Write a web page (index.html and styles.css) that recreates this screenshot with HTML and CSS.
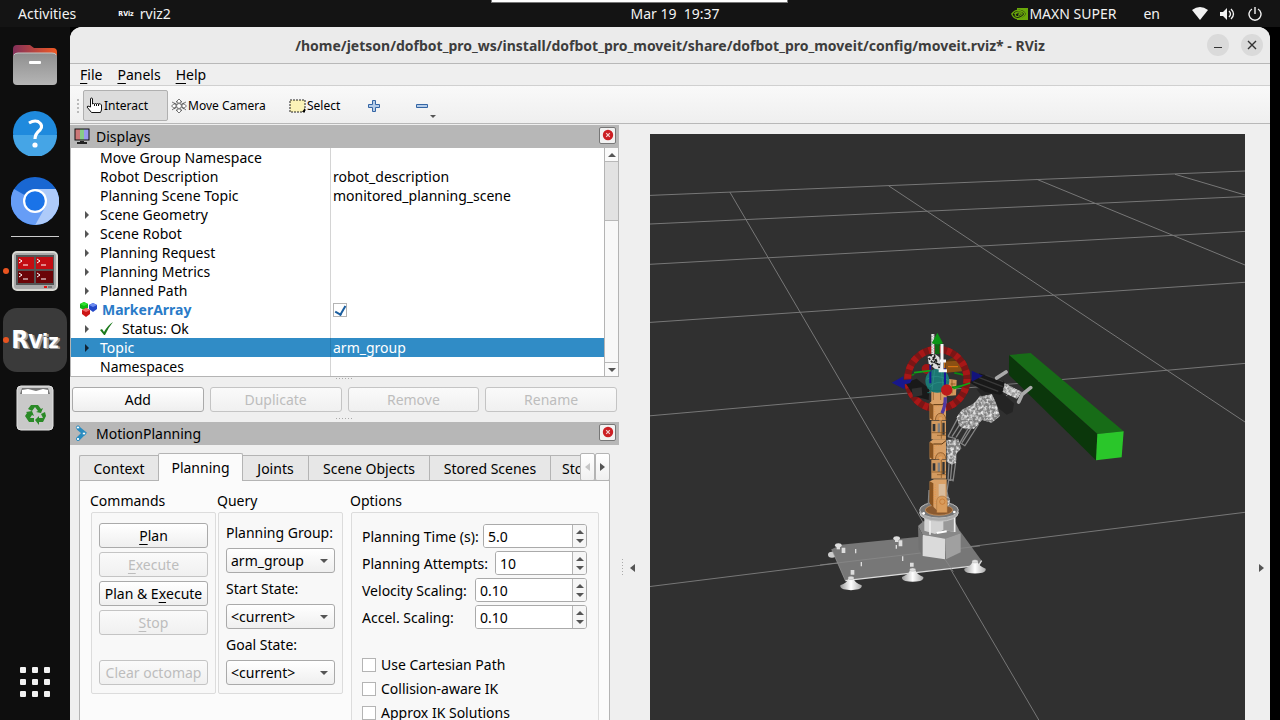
FILE: index.html
```html
<!DOCTYPE html>
<html lang="en">
<head>
<meta charset="utf-8">
<title>RViz</title>
<link rel="stylesheet" href="styles.css">
</head>
<body>
<header class="topbar">
  <div class="peek"></div>
  <div class="top-left">
    <span>Activities</span>
    <span class="app"><span class="rv-mini" aria-hidden="true">RViz</span>rviz2</span>
  </div>
  <time class="clock">Mar 19&nbsp; 19:37</time>
  <div class="top-right">
    <span class="power-mode"><svg width="17" height="12" viewBox="0 0 17 12"><path d="M6 0h11v12H6z" fill="#6aa80a"/><path d="M6 2v8q6 1 9-4-3-5-9-4z" fill="#141414"/><path d="M.8 6Q4 1.500 8 2.500q4 .5 6 3.500-4 5-8 4.500Q2.500 10 .8 6z" fill="none" stroke="#6aa80a" stroke-width="1.300"/><path d="M3 6q3-3.500 7-1.500 1 1 1.500 1.500Q9 9 6 8.500 3.500 8 4.500 6q2-2 4-.8L9.500 6 7 7.200" fill="none" stroke="#6aa80a" stroke-width="1.100"/></svg>MAXN SUPER</span>
    <span>en</span>
    <span class="status">
      <svg width="16" height="14" viewBox="0 0 16 14"><path d="M0 3q8-6 16 0L8 13z" fill="#f2f2f2"/></svg>
      <svg width="16" height="14" viewBox="0 0 16 14"><path d="M0 5h3l4-4v12l-4-4H0z" fill="#f2f2f2"/><path d="M9 4q3 3 0 6M11 2q5 5 0 10" fill="none" stroke="#f2f2f2" stroke-width="1.3"/></svg>
      <svg width="14" height="14" viewBox="0 0 14 14"><path d="M4 2a6 6 0 1 0 6 0M7 0v7" fill="none" stroke="#f2f2f2" stroke-width="1.4"/></svg>
    </span>
  </div>
</header>
<div class="desk">
  <nav class="dock" aria-label="Dock">
    <button class="dk" aria-label="Files"><svg width="46" height="42" viewBox="0 0 46 42"><defs><linearGradient id="fo"><stop offset="0" stop-color="#83305a"/><stop offset="1" stop-color="#f05a24"/></linearGradient><linearGradient id="fg" x2="0" y2="1"><stop offset="0" stop-color="#8f8f8f"/><stop offset="1" stop-color="#b5b5b5"/></linearGradient></defs><path d="M1 5q0-4 4-4h13l4 3h19q4 0 4 4v12H1z" fill="url(#fo)"/><rect x="1" y="9" width="44" height="32" rx="4" fill="url(#fg)"/><path d="M2 11q1-2 4-2h34q4 0 4 2" fill="none" stroke="#c5c5c5"/><rect x="17" y="17" width="12" height="3" rx="1" fill="#fff"/></svg></button>
    <button class="dk" aria-label="Help"><svg width="46" height="46" viewBox="0 0 46 46"><circle cx="23" cy="23" r="22" fill="#1f8add"/><path d="M1 25h44a22 22 0 0 1-44 0z" fill="#45a5e6"/><path d="M17 13q5-3 9-1.500 6 4 2 8.500-5 4-5 9" fill="none" stroke="#fff" stroke-width="3.200"/><circle cx="23" cy="35" r="2.6" fill="#fff"/></svg></button>
    <button class="dk" aria-label="Chromium"><svg width="48" height="48" viewBox="0 0 48 48"><circle cx="24" cy="24" r="24" fill="#1967d2"/><path d="M3 12A24 24 0 0 0 24 48L36 30 24 24z" fill="#669df6"/><path d="M24 12h20.800A24 24 0 0 1 24 48l11-19z" fill="#aecbfa"/><circle cx="24" cy="24" r="12" fill="#fff"/><circle cx="24" cy="24" r="9.800" fill="#1a73e8"/></svg></button>
    <hr class="dk-line">
    <button class="dk run" aria-label="Terminator"><svg width="46" height="40" viewBox="0 0 46 40"><rect x="1" y="1" width="44" height="38" rx="4" fill="#aaa" stroke="#d8d8d3" stroke-width="2"/><rect x="4" y="4" width="38" height="30" fill="#555"/><path d="M6 6h16v12H6zM24 6h17v12H24z" fill="#c20c12"/><path d="M6 20h16v12H6zM24 20h17v12H24z" fill="#6b0508"/><path d="M7 8l3 2-3 2m4 2h5M25 8l3 2-3 2m4 2h5M7 22l3 2-3 2m4 2h5M25 22l3 2-3 2m4 2h5" fill="none" stroke="#fff"/><path d="M32 36h3" stroke="#e01414" stroke-width="2"/><path d="M36 36h4" stroke="#777" stroke-width="2"/></svg></button>
    <button class="dk run active" aria-label="RViz"><span class="rv-logo">RViz</span></button>
    <button class="dk" aria-label="Trash"><svg width="38" height="46" viewBox="0 0 38 46"><rect x="1" y="1" width="36" height="44" rx="4" fill="#c9c9c9" stroke="#e4e4e4"/><path d="M4 9l2-6h26l2 6z" fill="#777"/><path d="M6 9V5l6-1 8 2 7-2 5 1v4z" fill="#fff"/><g fill="#2a8a27"><path d="M15 20h7l3 4 2-1-2 5-5-1 2-1-3-4-3 4-4-2z"/><path d="M25 29l4-2 1 4-3 6h-4v3l-4-5 4-4v2h4z"/><path d="M10 27l6-1 2 5-2-1-2 3h4v4h-5l-4-6 2-3z"/></g></svg></button>
    <button class="dk apps" aria-label="Show applications"><svg width="30" height="30" viewBox="0 0 30 30" fill="#f2f2f2"><rect width="6" height="6" rx="1"/><rect x="12" width="6" height="6" rx="1"/><rect x="24" width="6" height="6" rx="1"/><rect y="12" width="6" height="6" rx="1"/><rect x="12" y="12" width="6" height="6" rx="1"/><rect x="24" y="12" width="6" height="6" rx="1"/><rect y="24" width="6" height="6" rx="1"/><rect x="12" y="24" width="6" height="6" rx="1"/><rect x="24" y="24" width="6" height="6" rx="1"/></svg></button>
  </nav>
  <main class="window">
    <div class="titlebar">
      <h1>/home/jetson/dofbot_pro_ws/install/dofbot_pro_moveit/share/dofbot_pro_moveit/config/moveit.rviz* - RViz</h1>
      <div class="win-btns">
        <button aria-label="Minimize"><svg width="10" height="10" viewBox="0 0 10 10"><path d="M1 7.500h8" stroke="#333" stroke-width="1.2"/></svg></button>
        <button aria-label="Close"><svg width="10" height="10" viewBox="0 0 10 10"><path d="M1 1l8 8M9 1l-8 8" stroke="#333" stroke-width="1.4"/></svg></button>
      </div>
    </div>
    <div class="menubar"><button><u>F</u>ile</button><button><u>P</u>anels</button><button><u>H</u>elp</button></div>
    <div class="toolbar">
      <i class="grip"></i>
      <button class="tool on"><svg width="17" height="17" viewBox="0 0 17 17"><path d="M4.500 10V2q0-1 1-1t1 1v5q1-1 2 0 1-1 2 0 1-1 2 0 2-1 3 1v5l-1 2.500H5.500L1 10q0-2 3.500 0z" fill="#fff" stroke="#111"/><path d="M8.500 7v2M10.500 7v2M12.500 7v2" stroke="#111"/></svg>Interact</button>
      <button class="tool move"><svg width="16" height="16" viewBox="0 0 16 16" fill="#fff" stroke="#555" stroke-width=".8"><path d="M8 1l3 3H9v3h3V5l3.500 3-3.500 3V9H9v3h2l-3 3-3-3h2V9H4v2L.5 8 4 5v2h3V4H5z"/><path d="M1 4l6 3M15 4L9 7M1 12l4-3M15 12l-4-3"/><circle cx="8" cy="8" r="2.500"/></svg>Move Camera</button>
      <button class="tool sel"><svg width="17" height="14" viewBox="0 0 17 14"><path d="M1 1h15v12H1z" fill="#fbf3b7" stroke="#222" stroke-dasharray="2 1"/><path d="M16 9v4h-3z"/></svg>Select</button>
      <button class="tool add" aria-label="Add tool"><svg width="12" height="12" viewBox="0 0 12 12"><path d="M4.500.5h3v4h4v3h-4v4h-3v-4h-4v-3h4z" fill="#b5cce8" stroke="#3465a4"/></svg></button>
      <button class="tool rem" aria-label="Remove tool"><svg width="22" height="26" viewBox="0 0 22 26"><path d="M.5 11.500h11v3H.5z" fill="#b5cce8" stroke="#3465a4"/><path d="M14 22h6l-3 3z" fill="#555"/></svg></button>
    </div>
    <div class="content">
      <section class="panels">
        <div class="panel-title"><svg width="16" height="17" viewBox="0 0 16 17"><path d="M.5.5h15v12H.5z" fill="#111"/><path d="M1.500 1.500h4.500v10H1.500z" fill="#c77"/><path d="M6 1.500h4v10H6z" fill="#8c8"/><path d="M10 1.500h4.500v10H10z" fill="#99e"/><path d="M6 13h4v1h3v2H3v-2h3z" fill="#222"/></svg><h2>Displays</h2><button class="x" aria-label="Close Displays"><svg width="12" height="12" viewBox="0 0 12 12"><circle cx="6" cy="6" r="5.200" fill="#cc1f24"/><path d="M4.200 4.200l3.600 3.600M7.800 4.200L4.200 7.800" stroke="#f4d0d0" stroke-width="1.200"/></svg></button></div>
        <div class="tree-wrap">
          <table class="tree">
            <tr><td>Move Group Namespace</td><td></td></tr>
            <tr><td>Robot Description</td><td>robot_description</td></tr>
            <tr><td>Planning Scene Topic</td><td>monitored_planning_scene</td></tr>
            <tr class="ex"><td>Scene Geometry</td><td></td></tr>
            <tr class="ex"><td>Scene Robot</td><td></td></tr>
            <tr class="ex"><td>Planning Request</td><td></td></tr>
            <tr class="ex"><td>Planning Metrics</td><td></td></tr>
            <tr class="ex"><td>Planned Path</td><td></td></tr>
            <tr class="marker"><td><svg width="17" height="15" viewBox="0 0 17 15"><path d="M0 2l4-2 4 2v4L4 8 0 6z" fill="#10b510"/><path d="M9 3l4-2 4 2v4l-4 3-4-3z" fill="#2448c8"/><path d="M2 8l4-2 4 2v4l-4 3-4-3z" fill="#cc1515"/><path d="M0 2l4-2 4 2-4 2z" fill="#2ee02e"/><path d="M9 3l4-2 4 2-4 2z" fill="#6d8cf0"/><path d="M2 8l4-2 4 2-4 2z" fill="#f06a6a"/></svg>MarkerArray</td><td><input type="checkbox" checked aria-label="MarkerArray enabled"></td></tr>
            <tr class="ex ok"><td><svg width="14" height="14" viewBox="0 0 14 14"><path d="M0 8l2-1 2 3Q8 3 13 0 8 6 5 13H4z" fill="#1c7a1c"/></svg>Status: Ok</td><td></td></tr>
            <tr class="ex cur"><td>Topic</td><td>arm_group</td></tr>
            <tr><td>Namespaces</td><td></td></tr>
          </table>
          <div class="sbar"><button aria-label="Scroll up"><i class="up"></i></button><div class="thumb"></div><span class="track"></span><button aria-label="Scroll down"><i class="dn"></i></button></div>
        </div>
        <div class="hgrip"><i></i></div>
        <div class="btn-row"><button class="btn">Add</button><button class="btn" disabled>Duplicate</button><button class="btn" disabled>Remove</button><button class="btn" disabled>Rename</button></div>
        <div class="hgrip low"><i></i></div>
        <div class="panel-title"><svg width="16" height="17" viewBox="0 0 16 17"><path d="M4 3l6 5-6 6" fill="none" stroke="#2a8cc0" stroke-width="4"/><g fill="#fff" stroke="#2a8cc0"><circle cx="4" cy="2.500" r="1.600"/><circle cx="10" cy="8.500" r="1.600"/><circle cx="4" cy="14" r="1.600"/></g></svg><h2>MotionPlanning</h2><button class="x" aria-label="Close MotionPlanning"><svg width="12" height="12" viewBox="0 0 12 12"><circle cx="6" cy="6" r="5.200" fill="#cc1f24"/><path d="M4.200 4.200l3.600 3.600M7.800 4.200L4.200 7.800" stroke="#f4d0d0" stroke-width="1.200"/></svg></button></div>
        <div class="mp">
          <div class="tabs" role="tablist">
            <div class="tab-clip">
            <button class="tab t1" role="tab">Context</button><button class="tab t2 on" role="tab">Planning</button><button class="tab t3" role="tab">Joints</button><button class="tab t4" role="tab">Scene Objects</button><button class="tab t4" role="tab">Stored Scenes</button><button class="tab t5" role="tab">Stored States</button>
            </div>
            <button class="nav" aria-label="Previous tabs" disabled><i class="lf"></i></button><button class="nav" aria-label="Next tabs"><i class="rt"></i></button>
          </div>
          <div class="page">
            <section class="group">
              <h3>Commands</h3>
              <div class="box cmds">
                <button class="btn"><u>P</u>lan</button>
                <button class="btn" disabled><u>E</u>xecute</button>
                <button class="btn">Plan &amp; E<u>x</u>ecute</button>
                <button class="btn" disabled><u>S</u>top</button>
                <button class="btn clear" disabled>Clear octomap</button>
              </div>
            </section>
            <section class="group">
              <h3>Query</h3>
              <div class="box query">
                <label for="pg">Planning Group:</label><span class="combo"><select id="pg"><option>arm_group</option></select></span>
                <label for="ss">Start State:</label><span class="combo"><select id="ss"><option>&lt;current&gt;</option></select></span>
                <label for="gs">Goal State:</label><span class="combo"><select id="gs"><option>&lt;current&gt;</option></select></span>
              </div>
            </section>
            <section class="group opt">
              <h3>Options</h3>
              <div class="box opts">
                <div class="field"><label for="pt">Planning Time (s):</label><span class="spin wide"><input id="pt" value="5.0"><span><button aria-label="Increase"><i class="up"></i></button><button aria-label="Decrease"><i class="dn"></i></button></span></span></div>
                <div class="field"><label for="pa">Planning Attempts:</label><span class="spin mid"><input id="pa" value="10"><span><button aria-label="Increase"><i class="up"></i></button><button aria-label="Decrease"><i class="dn"></i></button></span></span></div>
                <div class="field"><label for="vs">Velocity Scaling:</label><span class="spin"><input id="vs" value="0.10"><span><button aria-label="Increase"><i class="up"></i></button><button aria-label="Decrease"><i class="dn"></i></button></span></span></div>
                <div class="field"><label for="as">Accel. Scaling:</label><span class="spin"><input id="as" value="0.10"><span><button aria-label="Increase"><i class="up"></i></button><button aria-label="Decrease"><i class="dn"></i></button></span></span></div>
                <div class="checks">
                  <label><input type="checkbox">Use Cartesian Path</label>
                  <label><input type="checkbox">Collision-aware IK</label>
                  <label><input type="checkbox">Approx IK Solutions</label>
                </div>
              </div>
            </section>
          </div>
        </div>
      </section>
      <div class="vsplit"><i class="vdots"></i><button aria-label="Collapse left"><i class="lf"></i></button></div>
      <div class="view">
        <svg viewBox="650 134 595 586" preserveAspectRatio="xMidYMin slice" role="img" aria-label="3D view of the robot arm">
          <defs>
            <linearGradient id="cup"><stop offset="0" stop-color="#999"/><stop offset=".5" stop-color="#fff"/><stop offset="1" stop-color="#aaa"/></linearGradient>
            <filter id="grain" x="0" y="0" width="1" height="1"><feTurbulence type="fractalNoise" baseFrequency=".12" numOctaves="2" seed="4" result="n"/><feColorMatrix in="n" values="0 0 0 0 .85  0 0 0 0 .85  0 0 0 0 .85  0 2.500 0 0 -1" result="w"/><feComposite in="w" in2="SourceGraphic" operator="in" result="c"/><feMerge><feMergeNode in="SourceGraphic"/><feMergeNode in="c"/></feMerge></filter>
            <g id="foot"><path d="M-8-22H8Q12-10 32-2q2 8-10 12-22 5-44 0Q-34 6-32-2-12-10-8-22z" fill="url(#cup)"/><ellipse cy="-24" rx="9" ry="5" fill="#ddd" stroke="#999"/></g>
            <g id="link"><path d="M-25 8L-14 0H24V60H-25z" fill="#d9a066"/><path d="M-25 8L-14 14V62L-25 54z" fill="#8a5420"/><path d="M-14 14H12L24 4" fill="none" stroke="#5a3510" stroke-width="3"/><path d="M-10 20v36M-6 18h18" stroke="#f08a30" stroke-width="2" stroke-dasharray="2 5"/><path d="M-8 60q2-20 16-20t16 20" fill="#cf9458" stroke="#7a4615" stroke-width="2"/><circle cx="8" cy="56" r="6" fill="#dba368" stroke="#e87a20" stroke-dasharray="2 3" stroke-width="2"/><path d="M-20 62H24v56H-20z" fill="#d39a5f"/><path d="M-16 72h8v22h-8zM13 68h7v36h-7z" fill="#333"/><path d="M-1 70h7v28h-7z" fill="#7e7e7e"/><path d="M-19 98h43M10 62v54M-3 106h27" stroke="#80501d" stroke-width="2"/></g>
          </defs>
          <path d="M650 134h595v586H650z" fill="#303030"/>
          <g stroke="#777" fill="none"><path d="M650 195.400L1245 171M650 224L1245 196.500M650 264.300L1245 231.400M650 322.400L1245 282.300M650 415.800L1245 363.400M650 586.500L1245 512.300"/><path d="M729.800 192L1038.800 720M888.600 185.800L1245 422M1036.800 179.300L1245 265M1175 174.300L1245 195"/></g>
          <g transform="translate(820 320) scale(.33333)">
            <path d="M567 105L632 99 911 334 832 342z" fill="#176c17"/><path d="M567 105L832 342 828 421 567 165z" fill="#0b370b"/><path d="M832 342L911 334 905 412 828 421z" fill="#2ac62a"/>
            <ellipse cx="36" cy="704" rx="12" ry="9" fill="#ccc"/>
            <path d="M35 688L62 674 300 650 420 633 485 722 476 736 76 782z" fill="#777"/>
            <path d="M76 782L476 736 485 722" fill="none" stroke="#ddd" stroke-width="4"/><path d="M35 688L76 782" stroke="#999" stroke-width="2"/>
            <path d="M0 735L480 678M375 718L400 755" stroke="#8c8c8c" stroke-width="2"/>
            <use href="#foot" x="93" y="798"/><use href="#foot" x="278" y="773"/><use href="#foot" x="465" y="748"/>
            <g fill="#ddd"><ellipse cx="55" cy="676" rx="10" ry="6"/><path d="M50 678h10v10H50z"/><ellipse cx="230" cy="655" rx="10" ry="6"/><path d="M225 658h10v8h-10zM65 683h11v16H65zM236 661h11v18h-11zM105 687h4v13h-4zM122 726h4v13h-4zM246 709h4v14h-4zM92 750h11v14H92zM270 728h11v12h-11zM227 675h4v11h-4z"/></g>
            <path d="M294 618L310 604 404 604 422 640 375 656 308 644z" fill="#888"/><path d="M294 618L308 644V708L296 688z" fill="#727272"/><path d="M308 644L375 656V718L308 708z" fill="#dadada"/><path d="M375 656L422 640V697L378 718z" fill="#a0a0a0"/>
            <path d="M313 590H405V636L370 630 345 642 313 632z" fill="#d2d2d2"/><path d="M370 590H405V636L370 630z" fill="#999"/><path d="M330 585V644M404 583V636" stroke="#eee" stroke-width="5"/><path d="M350 639L380 634" stroke="#fff" stroke-width="6"/>
            <ellipse cx="357" cy="578" rx="58" ry="26" fill="#aaa" stroke="#c8c8c8" stroke-width="3"/><ellipse cx="357" cy="570" rx="58" ry="24" fill="#777" stroke="#bbb" stroke-width="3"/><ellipse cx="357" cy="570" rx="41" ry="16" fill="#8a5a30" stroke="#d59a60" stroke-width="2"/>
            <g fill="#fff"><circle cx="311" cy="580" r="4"/><circle cx="403" cy="576" r="4"/><circle cx="374" cy="548" r="4"/></g>
            <g fill="none" stroke="#858585" stroke-width="4"><path d="M384 350L420 282M396 350L434 290M408 352L444 296M426 368L464 308M434 378L476 312M420 368L456 306M387 430L384 480M396 430L391 483M407 426L399 484M386 480L378 530M327 510L325 552M380 510L388 550M384 350L408 356M420 368L436 378M384 480H400"/></g>
            <g filter="url(#grain)" fill="#808080"><path d="M410 292L425 270 462 250 480 228 518 222 528 245 540 288 515 308 486 300 462 326 436 328 418 318z"/><path d="M380 360L415 358 424 385 410 400 408 428 395 434 380 425zM376 525L390 535 388 560 372 560z"/></g>
            <path d="M470 208L525 200 582 250 578 276 560 284 535 264 516 222 485 228z" fill="#242424"/>
            <path d="M448 187L478 160 550 182 566 210 540 224 496 216z" fill="#191919"/><path d="M470 170L548 200M460 186L535 214M496 165l54 20" stroke="#3a3a3a" stroke-width="4"/>
            <path d="M530 174L558 156M596 246L606 224 632 203" fill="none" stroke="#aaa" stroke-width="11" stroke-linecap="round"/>
            <path d="M554 190l52 26-16 20-42-20z" fill="#999" filter="url(#grain)"/><path d="M560 192l38 40M585 205l-26 22" stroke="#ddd" stroke-width="2"/>
            <path d="M376 124L424 122 426 154 378 158z" fill="#8a5013"/><path d="M376 124l26-14 22 12z" fill="#5c370f"/><path d="M374 126v24M384 140h30" stroke="#e67a10" stroke-width="3"/>
            <path d="M382 176L410 180 408 226 382 228z" fill="#d39a5c"/><path d="M392 192h14M396 180v40" stroke="#7a4612" stroke-width="2"/>
            <ellipse cx="352" cy="180" rx="96" ry="25" fill="none" stroke="#0a8a10" stroke-width="5" stroke-dasharray="60 30"/>
            <circle cx="352" cy="177" r="89" fill="none" stroke="#7a1616" stroke-width="21"/><circle cx="352" cy="177" r="89" fill="none" stroke="#a81717" stroke-width="21" stroke-dasharray="14 14"/>
            <path d="M256 188L290 176 328 206 326 240 282 228z" fill="#191919"/><path d="M275 206l30-4 2 24-28 6z" fill="#303030"/>
            <path d="M334 212H380V250H334z" fill="#d9a066"/><path d="M340 216v30M362 214v30" stroke="#8b551f" stroke-width="2"/>
            <use href="#link" x="354" y="240"/><use href="#link" x="354" y="358"/>
            <path d="M329 484L342 478H380V570H350L329 550z" fill="#d9a066"/><path d="M356 492h20v40h-20z" fill="#d9bc9c"/><path d="M329 484L340 490V562L329 550z" fill="#8a5420"/><path d="M346 494v60M341 500v50" stroke="#f08a30" stroke-width="2" stroke-dasharray="2 5"/><path d="M350 578V542q3-14 16-14t16 14V578z" fill="#d99c5c" stroke="#8a501a" stroke-width="1"/><circle cx="367" cy="545" r="8" fill="none" stroke="#c0702a" stroke-width="2"/>
            <circle cx="320" cy="147" r="15" fill="#a01515"/>
            <circle cx="352" cy="182" r="36" fill="#1c7773"/><path d="M320 178q30-20 66 4M330 200q20-20 50-10M344 150l-8 60M364 150l6 60" fill="none" stroke="#2d938a" stroke-width="2"/><path d="M322 204h10v14h-10M332 212h44" stroke="#187068" stroke-width="3" fill="none"/>
            <path d="M331 135V190M375 145V212" stroke="#17179a" stroke-width="6"/><path d="M376 232Q376 260 366 280" fill="none" stroke="#5038a0" stroke-width="10"/>
            <path d="M215 188L250 169V180L277 178 270 190 254 193V208z" fill="#18188c"/><path d="M455 152L489 167 455 185z" fill="#13137c"/>
            <path d="M334 42h9v60h-9z" fill="#e6e6e6"/><path d="M336 48v56M342 44v50" stroke="#555" stroke-width="2" stroke-dasharray="3 5"/><path d="M352 38L369 70Q352 78 335 70z" fill="#0b9416"/><path d="M345 74h14v28h-14z" fill="#0c6a12"/>
            <path d="M323 110L345 102 358 112 364 150 344 146 326 130z" fill="#ddd"/><path d="M326 114l10 12 8-18 4 22 12 4M334 138l14-18 10 24M330 104l20 18" fill="none" stroke="#202020" stroke-width="5" stroke-dasharray="7 4"/>
            <path d="M366 72V152M356 152H381M360 123H378" stroke="#f5f5f5" stroke-width="9"/>
            <circle cx="380" cy="210" r="17" fill="#bd1b1b"/><path d="M282 158l50-6M400 206l50-17" stroke="#10a416" stroke-width="5"/>
          </g>
        </svg>
      </div>
      <div class="vright"><button aria-label="Collapse right"><i class="rt"></i></button></div>
    </div>
  </main>
</div>
</body>
</html>
```
FILE: styles.css
```css
* { box-sizing: border-box; }
body { margin: 0; height: 100vh; overflow: hidden; display: flex; flex-direction: column; background: #000; color: #000; font: 14px/19px "Noto Sans", sans-serif; }
button { font: inherit; color: inherit; border: 0; padding: 0; background: none; display: flex; align-items: center; justify-content: center; }
h1, h2, h3 { margin: 0; font: inherit; }
svg { display: block; flex: none; }
u { text-underline-offset: 3px; }
.rv-logo, .rv-mini { font-family: "DejaVu Sans Condensed", "DejaVu Sans", sans-serif; font-stretch: condensed; font-weight: 700; color: #fff; }
.rv-logo { font-size: 20px; line-height: 34px; text-shadow: 1px 1px #999, 2px 1px #999; }
.rv-logo::first-letter { font-size: 25px; }
.rv-mini { font-size: 7px; line-height: 14px; }

.topbar { position: relative; height: 27px; flex: none; background: #141414; color: #f2f2f2; display: grid; grid-template-columns: 1fr auto 1fr; align-items: center; padding: 0 18px; }
.peek { position: absolute; left: 491px; top: 0; width: 297px; height: 3px; background: #fff; border: 1px solid #777; border-top: 0; }
.top-left, .top-right { display: flex; align-items: center; }
.top-left { gap: 42px; }
.app { display: flex; align-items: center; gap: 6px; }
.clock { margin-left: 70px; }
.top-right { justify-content: flex-end; gap: 28px; }
.power-mode { display: flex; align-items: center; gap: 1px; }
.power-mode { margin-right: -1px; }
.status { display: flex; gap: 12px; margin-left: 4px; }

.desk { flex: 1; min-height: 0; display: flex; padding-right: 10px; }
.dock { width: 70px; flex: none; background: #0e0e0e; display: flex; flex-direction: column; align-items: center; padding: 6px 3px; gap: 4px; }
.dk { width: 64px; height: 64px; border-radius: 14px; position: relative; flex: none; }
.dk.active { background: #3a3a3a; margin-top: 1px; }
.dk.run::before { content: ""; position: absolute; left: 0; top: 29px; width: 6px; height: 6px; border-radius: 50%; background: #e95420; }
.dk-line { width: 48px; height: 1px; border: 0; background: #ccc; margin: -1px 0 -2px; }
.dk.apps { margin-top: auto; }

.window { flex: 1; min-width: 0; display: flex; flex-direction: column; background: #efefef; border-radius: 12px 12px 0 0; overflow: hidden; }
.titlebar { height: 37px; flex: none; display: flex; align-items: center; background: #ebebeb; border-bottom: 1px solid #b8b8b8; padding: 0 7px; }
.titlebar h1 { flex: 1; text-align: center; font-weight: 700; color: #3d3d3d; padding-left: 56px; white-space: nowrap; }
.win-btns { display: flex; gap: 12px; }
.win-btns button { width: 22px; height: 22px; border-radius: 50%; background: #dadada; }
.menubar { height: 22px; flex: none; display: flex; gap: 15px; padding: 0 10px; border-bottom: 1px solid #d0d0d0; }
.toolbar { height: 38px; flex: none; display: flex; align-items: center; padding: 2px 0 0 6px; background: linear-gradient(#f9f9f9, #efefef); border-bottom: 1px solid #b8b8b8; font-size: 12px; }
.grip { width: 4px; height: 16px; margin-right: 3px; background: radial-gradient(circle, #bbb 1px, transparent 1px) 0 0 / 4px 4px; }
.tool { height: 31px; gap: 1px; justify-content: flex-start; padding: 0 2px; border: 1px solid transparent; white-space: nowrap; }
.tool.on { width: 85px; background: #dcdcdc; border-color: #b0b0b0; border-radius: 2px; }
.tool.move { width: 118px; }
.tool.sel { width: 77px; }
.tool.add { width: 48px; padding-left: 4px; }
.tool.rem { padding-left: 4px; }

.content { flex: 1; min-height: 0; display: flex; padding-top: 1px; }
.panels { width: 549px; flex: none; display: flex; flex-direction: column; min-height: 0; }
.panel-title { height: 23px; flex: none; display: flex; align-items: center; gap: 6px; background: #b7b7b7; padding: 0 3px 0 4px; }
.panel-title h2 { flex: 1; }
.x { width: 17px; height: 17px; border: 1px solid #777; border-radius: 2px; background: #f2f2f2; margin-bottom: 3px; }
.tree-wrap { flex: none; display: flex; border: 1px solid #b4b4b4; border-top: 0; background: #fff; }
.tree { flex: 1; border-collapse: separate; border-spacing: 0; table-layout: fixed; background: #fff; }
.tree td { height: 19px; padding: 0; line-height: 19px; white-space: nowrap; }
.tree td:first-child { width: 260px; padding-left: 29px; border-right: 1px solid #d4d4d4; }
.tree td + td { padding-left: 2px; }
.tree .ex td:first-child { padding-left: 14px; }
.tree .ex td:first-child::before { content: ""; display: inline-block; border: 4px solid transparent; border-left-color: #555; border-right: 0; margin-right: 11px; vertical-align: 1px; }
.tree svg { display: inline-block; vertical-align: -2px; }
.tree .marker td { color: #2a7bc8; font-weight: 700; }
.tree .marker td:first-child { padding-left: 9px; }
.tree .marker svg { margin-right: 5px; }
.tree .ok svg { margin-right: 8px; }
.tree .cur { background: #308cc6; color: #fff; }
.tree .cur td:first-child { border-color: #287cb0; }
.tree .cur td:first-child::before { border-left-color: #123; }
input[type="checkbox"] { appearance: none; width: 14px; height: 14px; margin: 0; border: 1px solid #b4b4b4; background: #fff; flex: none; }
.tree input { display: block; }
.tree input:checked::after { content: ""; display: block; width: 5px; height: 9px; margin-left: 3px; border: solid #1b5e9f; border-width: 0 2px 2px 0; transform: rotate(30deg); }
.sbar { width: 14px; flex: none; display: flex; flex-direction: column; border-left: 1px solid #b4b4b4; background: #f8f8f8; }
.sbar button { height: 13px; background: #fafafa; }
.thumb { height: 60px; background: #e2e2e2; border: solid #b8b8b8; border-width: 1px 0; }
.track { flex: 1; border-bottom: 1px solid #b8b8b8; }
i { display: block; flex: none; }
.up { border: 4px solid transparent; border-bottom-color: #555; border-top: 0; }
.dn { border: 4px solid transparent; border-top-color: #555; border-bottom: 0; }
.lf { border: 4px solid transparent; border-right: 5px solid #555; border-left: 0; }
.rt { border: 4px solid transparent; border-left: 5px solid #555; border-right: 0; }
.hgrip { height: 10px; flex: none; display: flex; justify-content: center; }
.hgrip i { width: 18px; height: 1px; margin-top: 1px; background: repeating-linear-gradient(90deg, #aaa 0 1px, transparent 1px 3px); }
.hgrip.low i { margin-top: 6px; }
.btn-row { display: flex; gap: 6px; padding: 0 2px; }
.btn { height: 25px; border: 1px solid #aaa; border-radius: 3px; background: linear-gradient(#fff, #efefef); white-space: nowrap; width: 100%; flex: none; }
.btn-row .btn { flex: 1; width: auto; }
.btn:disabled { color: #bdbdbd; border-color: #c4c4c4; background: linear-gradient(#fafafa, #f0f0f0); }

.mp { flex: 1; min-height: 0; padding: 8px 9px 0; display: flex; flex-direction: column; }
.tabs { display: flex; height: 28px; flex: none; align-items: flex-start; position: relative; z-index: 1; margin-bottom: -1px; }
.tab-clip { flex: 1; min-width: 0; display: flex; height: 28px; align-items: flex-end; overflow: hidden; }
.tab { height: 26px; flex: none; border: 1px solid #b4b4b4; border-right: 0; background: #e7e7e7; }
.tab.on { height: 28px; background: #fbfbfb; border-right: 1px solid #b4b4b4; border-bottom: 0; border-radius: 2px 2px 0 0; }
.tab.on + .tab { border-left: 0; }
.t1 { width: 79px; border-radius: 2px 0 0; }
.t2 { width: 85px; }
.t3 { width: 65px; }
.t4 { width: 121px; }
.t5 { padding: 0 11px; }
.nav { width: 15px; height: 28px; border: 1px solid #b4b4b4; border-radius: 2px; background: linear-gradient(#fff, #f0f0f0); }
.nav:disabled i { opacity: .3; }
.page { flex: 1; min-height: 0; overflow: hidden; border: 1px solid #b4b4b4; border-bottom: 0; background: #fbfbfb; display: flex; align-items: flex-start; gap: 1px; padding: 10px 10px 0; }
.group { width: 126px; flex: none; }
.group.opt { flex: 1; width: auto; margin-left: 6px; }
.group h3 { height: 21px; white-space: nowrap; }
.box { border: 1px solid #dcdcdc; border-radius: 2px; background: #f8f8f8; margin-left: 1px; }
.cmds, .query { height: 182px; padding: 10px 7px 0; display: flex; flex-direction: column; }
.cmds { gap: 4px; }
.clear { margin-top: 21px; }
.query label { height: 25px; white-space: nowrap; }
.query label + .combo + label { height: 31px; padding-top: 6px; }
.combo { position: relative; height: 25px; flex: none; }
.combo::after { content: ""; position: absolute; right: 7px; top: 11px; border: 4px solid transparent; border-top-color: #555; border-bottom: 0; pointer-events: none; }
select { appearance: none; width: 100%; height: 25px; border: 1px solid #aaa; border-radius: 3px; background: linear-gradient(#fff, #efefef); font: inherit; color: inherit; padding: 0 4px; }
.opts { padding: 11px 11px 20px 10px; }
.field { display: flex; align-items: center; justify-content: space-between; height: 24px; margin-bottom: 3px; white-space: nowrap; }
.spin { display: flex; width: 112px; height: 24px; border: 1px solid #aaa; border-radius: 3px; background: #fff; overflow: hidden; }
.spin.wide { width: 104px; }
.spin.mid { width: 92px; }
.spin input { flex: 1; min-width: 0; border: 0; padding: 0 4px; background: #fff; font: inherit; }
.spin > span { width: 14px; display: flex; flex-direction: column; justify-content: center; gap: 5px; border-left: 1px solid #b4b4b4; background: #f6f6f6; }
.checks { padding-top: 23px; display: flex; flex-direction: column; gap: 5px; }
.checks label { display: flex; align-items: center; gap: 5px; white-space: nowrap; }
.vsplit { width: 31px; flex: none; display: flex; align-items: center; gap: 7px; padding-left: 3px; margin-bottom: -290px; }
.vdots { width: 1px; height: 17px; background: repeating-linear-gradient(#aaa 0 1px, transparent 1px 3px); }
.view { flex: 1; min-width: 0; padding-top: 9px; }
.view svg { width: 100%; height: 100%; }
.vright { width: 25px; flex: none; display: flex; align-items: center; padding-left: 14px; margin-bottom: -290px; }
```
